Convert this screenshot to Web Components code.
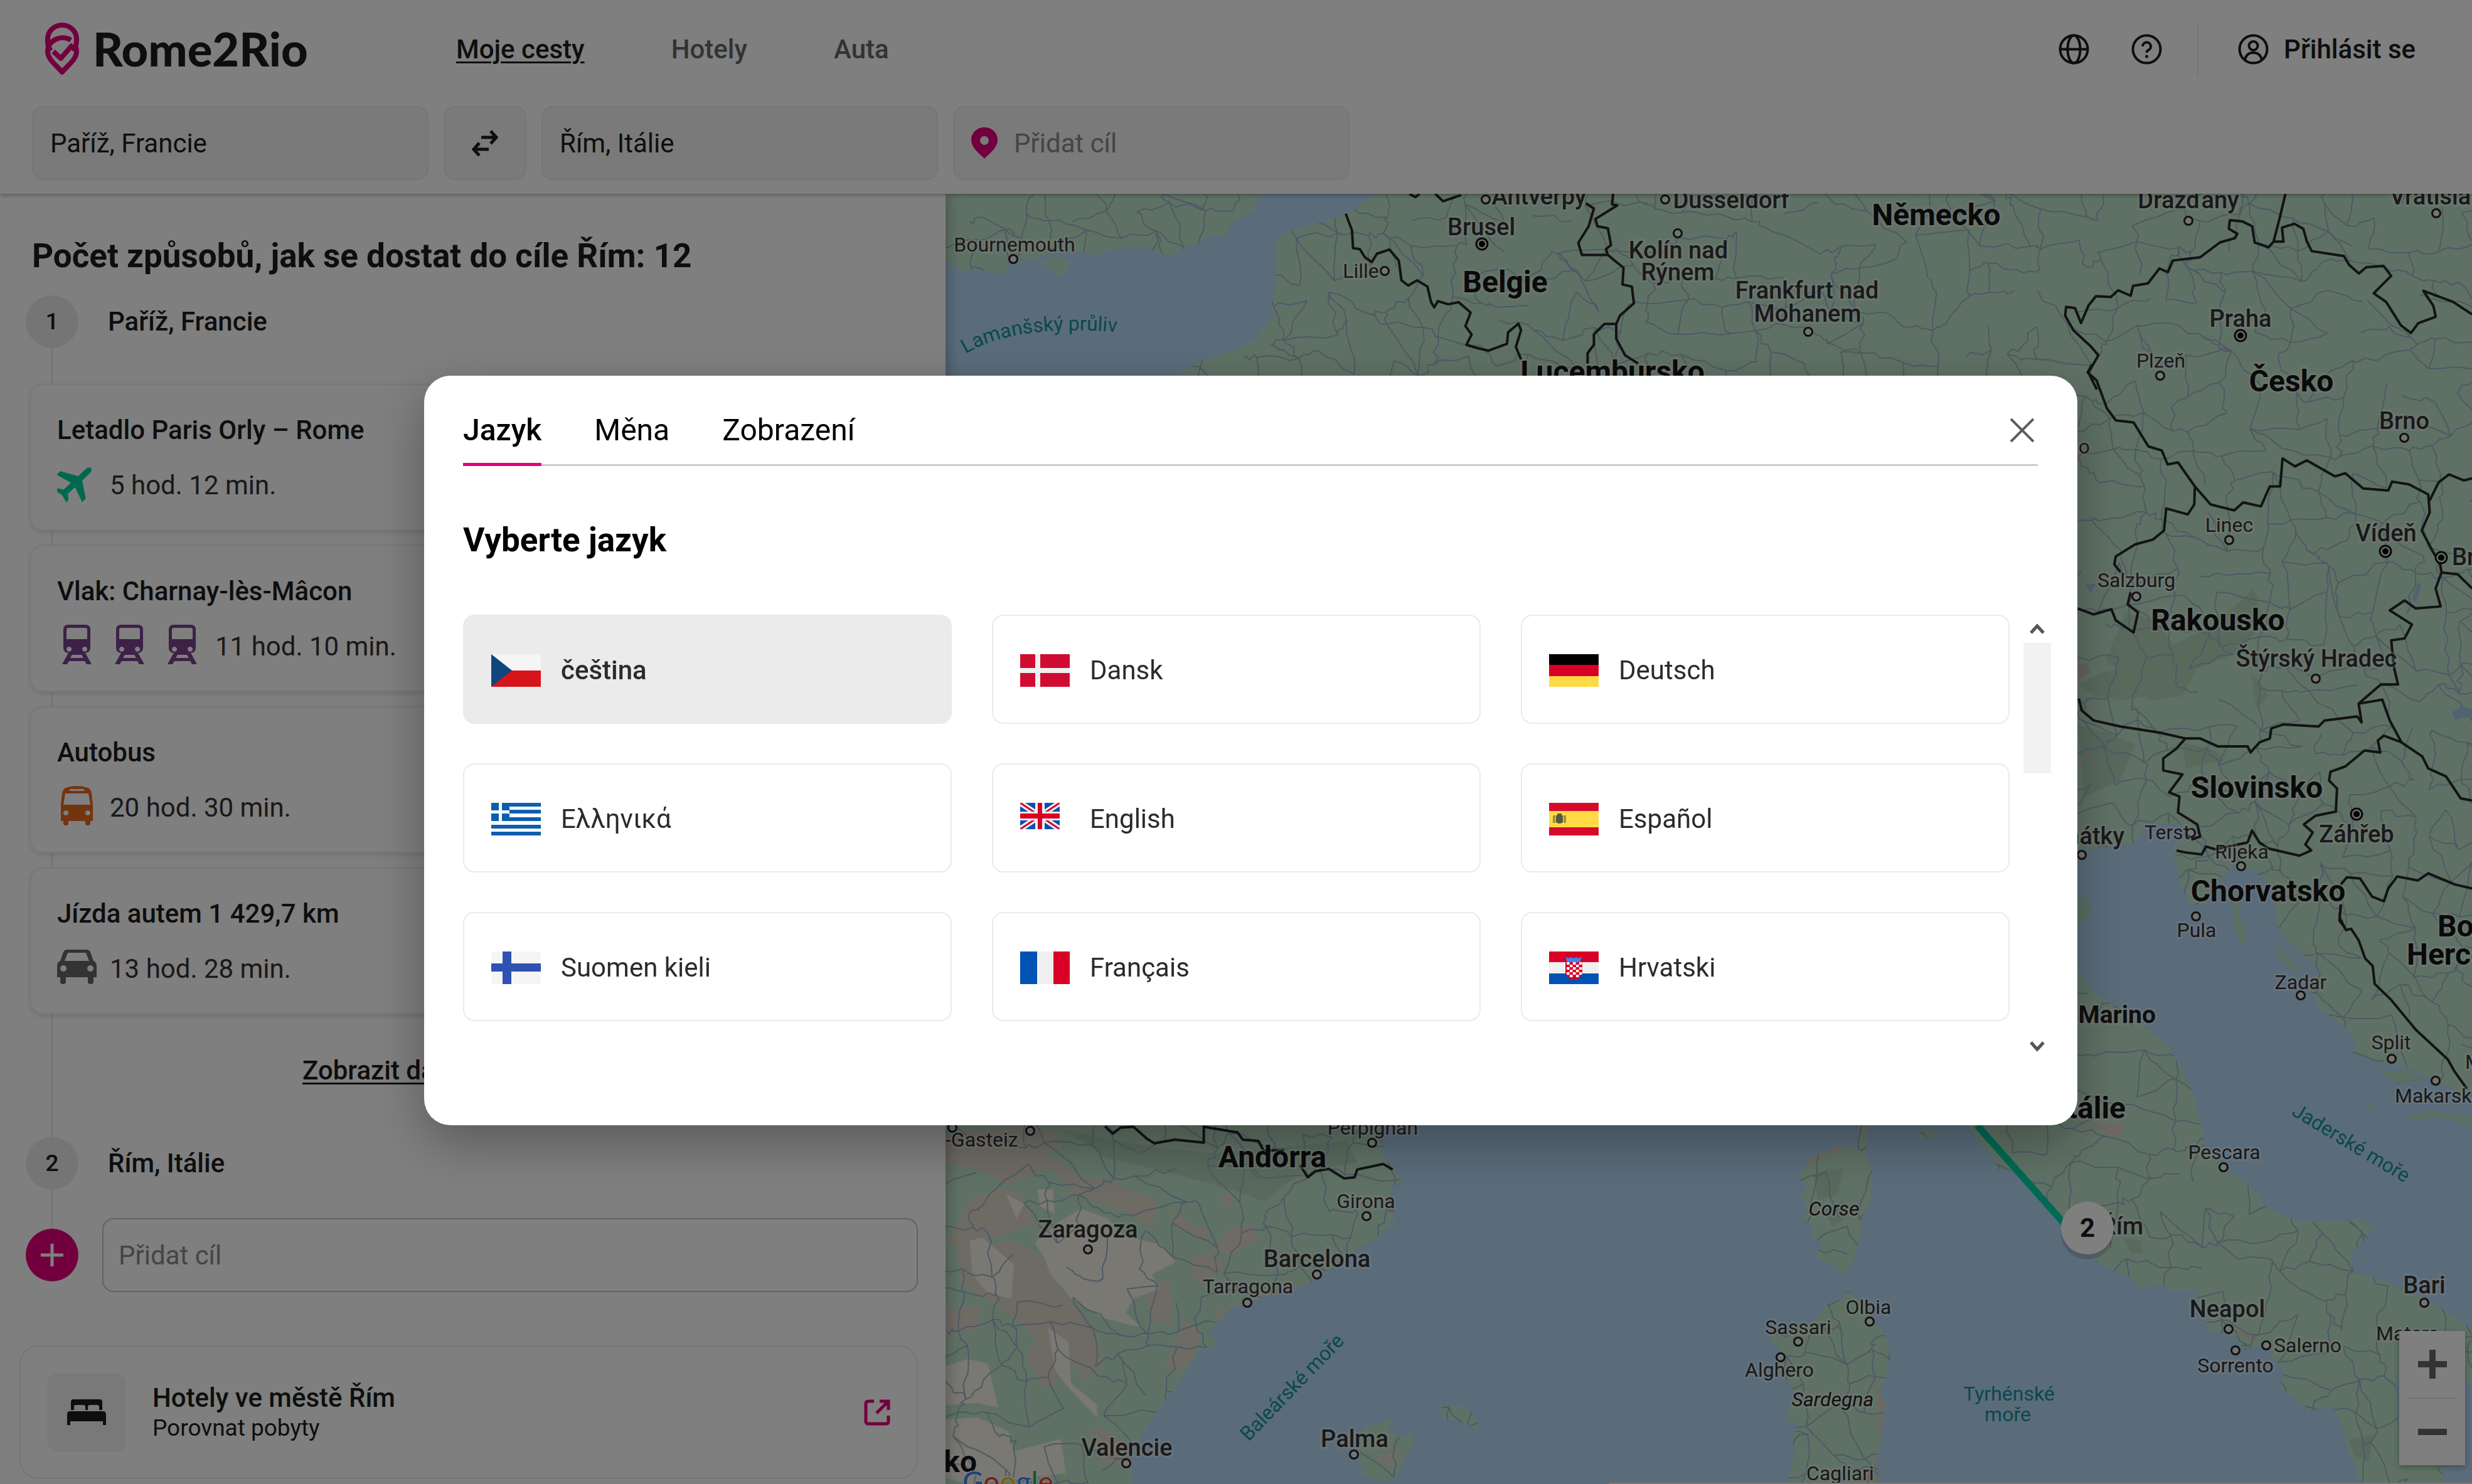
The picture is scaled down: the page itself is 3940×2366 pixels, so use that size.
<!DOCTYPE html>
<html lang="cs">
<head>
<meta charset="utf-8">
<title>Rome2Rio</title>
<style>
  html, body { margin: 0; height: 100%; }
  body { font-family: Roboto, "Liberation Sans", sans-serif; font-size: 42px; line-height: 50px; color: #1c1c1c; background: #fff; overflow: hidden; }
</style>
</head>
<body>
<r-app></r-app>

<script>
const define = (name, html, setup) => customElements.define(name, class extends HTMLElement {
  constructor() {
    super();
    const root = this.attachShadow({ mode: "open" });
    root.innerHTML = typeof html === "function" ? html(this) : html;
    if (setup) setup(root, this);
  }
});

const BASE = `<style>
  *, *::before { box-sizing: border-box; }
  button, input { font: inherit; color: inherit; margin: 0; padding: 0; border: 0; background: none; outline: none; }
  h1, h2, p { margin: 0; }
  a { color: inherit; }
  svg { display: block; flex: none; }
</style>`;

/* ---------- icons ---------- */
const ICONS = {
  pin: [54, 84, "0 0 54 84", `<g fill="none" stroke="#e5007d" stroke-width="8" stroke-linejoin="round"><path d="M9 45C3 37 4 31 4 26A23 22 0 0 1 50 26C50 34 49 40 45 46"/><path d="M41 28C27 19 4 27 4 46C4 59 18 68 27 79C36 68 50 59 50 46C50 41 48 37 46 34"/><path d="M13 46L25 57L44 35"/></g>`],
  globe: [49, 49, "0 0 49 49", `<g fill="none" stroke="#1c1c1c" stroke-width="4"><circle cx="24.500" cy="24.500" r="22"/><ellipse cx="24.500" cy="24.500" rx="10" ry="22"/><path d="M3 24.500h43"/></g>`],
  help: [49, 49, "0 0 49 49", `<g fill="none" stroke="#1c1c1c" stroke-width="4"><circle cx="24.500" cy="24.500" r="22"/><path d="M18 20a6.500 6.500 0 1 1 9 6c-2 1-2.500 2-2.500 4"/></g><circle cx="24.500" cy="36" r="2.500" fill="#1c1c1c"/>`],
  user: [49, 49, "0 0 49 49", `<g fill="none" stroke="#1c1c1c" stroke-width="4"><circle cx="24.500" cy="24.500" r="22"/><circle cx="24.500" cy="19" r="7"/><path d="M11 41c2-8 7-11 13.500-11s11.500 3 13.500 11"/></g>`],
  swap: [42, 42, "0 0 42 42", `<g fill="none" stroke="#1c1c1c" stroke-width="5"><path d="M15 12h24M30 2l9 10-9 10"/><path d="M27 31H3M12 21L3 31l9 10"/></g>`],
  marker: [42, 50, "0 0 42 50", `<path fill="#e5007d" fill-rule="evenodd" d="M21 0C9 0 0 9 0 20c0 12 12 21 21 30 9-9 21-18 21-30C42 9 33 0 21 0zm0 14a7 7 0 1 1 0 14 7 7 0 0 1 0-14z"/>`],
  plane: [63, 63, "2.500 2.500 20 20", `<path fill="#00d0a0" transform="rotate(47 12 12)" d="M21.500 16.500v-2.500l-8-5V3.500c0-.9-.7-2-1.500-2s-1.500 1.100-1.500 2V9l-8 5v2.500l8-2.500V19l-2.500 1.800V22.500l4-1 4 1v-1.700L13.500 19v-5l8 2.500z"/>`],
  train: [63, 63, "0 0 63 63", `<path fill="#7a428e" fill-rule="evenodd" d="M18 0h27q8 0 8 8v29q0 7-8 8l10 18h-8l-3-5H19l-3 5H8l10-18q-8-1-8-8V8q0-8 8-8zm0 5q-3 0-3 3v15h33V8q0-3-3-3zm1 30a4 4 0 1 0 .1 0zm25 0a4 4 0 1 0 .1 0zM24 48l-3 5h21l-3-5z"/>`],
  bus: [63, 63, "0 0 63 63", `<path fill="#e66b20" fill-rule="evenodd" d="M14 3Q31-3 49 3q5 2 6 9l2 18v26h-4v4q0 3-4 3t-4-3v-4H18v4q0 3-4 3t-4-3v-4H6V30L8 12q1-7 6-9zM20 5v3h23V5zM13 12l-3 18h43l-3-18zM14 39a4 4 0 1 0 .1 0zm35 0a4 4 0 1 0 .1 0z"/>`],
  car: [63, 63, "0 0 63 63", `<path fill="#666" fill-rule="evenodd" d="M16 4h31q4 0 6 4l5 14q5 2 5 8v18h-5v7q0 4-4.500 4T49 55v-7H14v7q0 4-4.500 4T5 55v-7H0V30q0-6 5-8l5-14q2-4 6-4zm1 5l-5 13h39L46 9zM10 29a5 5 0 1 0 .1 0zm43 0a5 5 0 1 0 .1 0z"/>`],
  plus: [42, 42, "0 0 42 42", `<path d="M21 3v36M3 21h36" stroke="#fff" stroke-width="5"/>`],
  bed: [62, 42, "0 0 62 42", `<path fill="#1c1c1c" d="M6 17V4q0-4 4-4h42q4 0 4 4v13h-5v-5q0-3-3-3H36q-3 0-3 3v5h-4v-5q0-3-3-3H14q-3 0-3 3v5zM5 19h52q5 0 5 5v17h-5v-6H5v6H0V24q0-5 5-5z"/>`],
  external: [42, 42, "0 0 42 42", `<path fill="none" stroke="#e5007d" stroke-width="5" d="M16 3H7Q3 3 3 7v28q0 4 4 4h28q4 0 4-4v-9M25 3h14v14M39 3L20 22"/>`],
  close: [38, 38, "0 0 38 38", `<path d="M1 1l36 36M37 1L1 37" stroke="#5c5c5c" stroke-width="4"/>`],
  up: [24, 18, "0 0 24 18", `<path d="M2 15L12 4l10 11" fill="none" stroke="#555" stroke-width="5"/>`],
  down: [24, 18, "0 0 24 18", `<path d="M2 3l10 11L22 3" fill="none" stroke="#555" stroke-width="5"/>`],
  zoomin: [46, 46, "0 0 46 46", `<path d="M23 0v46M0 23h46" stroke="#666" stroke-width="10"/>`],
  zoomout: [46, 46, "0 0 46 46", `<path d="M0 23h46" stroke="#666" stroke-width="10"/>`]
};
define("r-icon", el => {
  const [w, h, box, body] = ICONS[el.getAttribute("name")];
  return `<style>:host { display: block; flex: none } svg { display: block }</style><svg width="${w}" height="${h}" viewBox="${box}" aria-hidden="true">${body}</svg>`;
});

/* ---------- flags ---------- */
const checks = (() => { let s = ""; for (let r = 0; r < 6; r++) for (let c = 0; c < 5; c++) if ((r + c) % 2 === 0) s += `<rect x="${28 + c * 5}" y="${17 + r * 4}" width="4.500" height="4" />`; return s; })();
const FLAGS = {
  cs: `<path fill="#f5f5f5" d="M0 0h79v26H0z"/><path fill="#d7141a" d="M0 26h79v26H0z"/><path fill="#11457e" d="M0 0l33 26L0 52z"/>`,
  da: `<path fill="#d00c33" d="M0 0h79v52H0z"/><path fill="#f0f0f0" d="M24 0h8v52h-8zM0 22h79v8H0z"/>`,
  de: `<path d="M0 0h79v18H0z"/><path fill="#d80027" d="M0 17h79v18H0z"/><path fill="#ffda44" d="M0 35h79v17H0z"/>`,
  el: `<path fill="#fff" d="M0 0h79v52H0z"/><path fill="#0d5eaf" d="M0 0h79v6H0zM0 11h79v6H0zM0 23h79v6H0zM0 35h79v6H0zM0 46h79v6H0zM0 0h29v29H0z"/><path fill="#fff" d="M12 0h5v29h-5zM0 12h29v5H0z"/>`,
  en: `<svg width="63" height="42" viewBox="0 0 63 42"><path fill="#0052b4" d="M0 0h63v42H0z"/><path stroke="#f0f0f0" stroke-width="9" d="M0 0l63 42M63 0L0 42"/><path stroke="#d80027" stroke-width="3" d="M0 0l63 42M63 0L0 42"/><path fill="#f0f0f0" d="M24 0h15v42H24zM0 14h63v14H0z"/><path fill="#d80027" d="M28 0h7v42h-7zM0 17h63v8H0z"/></svg>`,
  es: `<path fill="#d80a2c" d="M0 0h79v52H0z"/><path fill="#ffda44" d="M0 13h79v26H0z"/><path fill="#a09236" d="M6 20h4v12H6zM23 20h4v12h-4z"/><path fill="#555a3a" d="M11 20h11v11q-5 4-11 0zM13 17h7v3h-7z"/>`,
  fi: `<path fill="#f5f5f5" d="M0 0h79v52H0z"/><path fill="#2e52b2" d="M18 0h14v52H18zM0 19h79v13H0z"/>`,
  fr: `<path fill="#f0f0f0" d="M0 0h79v52H0z"/><path fill="#0052b4" d="M0 0h27v52H0z"/><path fill="#d80027" d="M53 0h26v52H53z"/>`,
  hr: `<clipPath id="shield"><path d="M26 17h27v18q-2 8-13.500 11Q28 43 26 35z"/></clipPath><path fill="#f0f0f0" d="M0 0h79v52H0z"/><path fill="#d80027" d="M0 0h79v17H0z"/><path fill="#0052b4" d="M0 35h79v17H0z"/><path fill="#338af3" d="M26 9l3 8h20l3-8-5 2-4-2-4 2-4-2-4 2z"/><path fill="#d80027" d="M26 17h27v18q-2 8-13.500 11Q28 43 26 35z"/><g fill="#fff" clip-path="url(#shield)">${checks}</g>`
};
define("r-language", el => `${BASE}<style>
  :host { display: block }
  button { display: flex; align-items: center; gap: 32px; width: 100%; height: 174px; padding: 4px 43px 0; border: 2px solid #ebebeb; border-radius: 18px; color: #2b2b2b; text-align: left; }
  :host([selected]) button { background: #ebebeb; font-weight: 500; }
</style><button type="button"><svg width="79" height="52" viewBox="0 0 79 52" aria-hidden="true">${FLAGS[el.getAttribute("lang")]}</svg><slot></slot></button>`);

/* ---------- header ---------- */
define("r-field", el => `${BASE}<style>
  :host { display: block; flex: none; width: 632px }
  label { display: flex; align-items: center; gap: 26px; height: 118px; padding: 0 27px; background: #f4f4f4; border: 2px solid #ebebeb; border-radius: 18px; }
  input { flex: 1; min-width: 0; height: 100%; }
  input::placeholder { color: #8a8a8a; opacity: 1; }
  :host([outlined]) { width: auto; flex: 1 }
  :host([outlined]) label { background: #fff; border-color: #c4c4c4; padding: 0 24px; }
</style><label>${el.hasAttribute("marker") ? '<r-icon name="marker"></r-icon>' : ""}<input type="text" aria-label="${el.getAttribute("label")}" value="${el.getAttribute("value") || ""}" placeholder="${el.getAttribute("placeholder") || ""}"></label>`);

define("r-header", `${BASE}<style>
  :host { display: block; position: relative; z-index: 2; background: #fff; box-shadow: 0 2px 7px rgba(0,0,0,.3); padding-bottom: 22px; }
  .top { display: flex; align-items: center; height: 157px; padding: 0 90px 0 72px; }
  .logo { display: flex; align-items: center; gap: 22px; min-width: 655px; text-decoration: none; font: 900 74px/90px Lato, Roboto, sans-serif; padding-bottom: 2px; }
  nav { display: flex; gap: 138px; flex: 1; font-weight: 500; }
  nav a { text-decoration: none; color: #666; }
  nav a.on { color: #1c1c1c; text-decoration: underline; text-decoration-thickness: 3px; text-underline-offset: 5px; }
  .tools { display: flex; align-items: center; font-weight: 500; gap: 67px; }
  .tools button { display: flex; align-items: center; gap: 24px; }
  .rule { width: 2px; height: 88px; background: #ebebeb; margin: 0 -4px 0 -11px; }
  form { display: flex; gap: 24px; padding: 12px 51px 0; }
  .swap { display: grid; place-items: center; width: 132px; height: 118px; background: #f4f4f4; border: 2px solid #ebebeb; border-radius: 18px; }
</style>
<div class="top">
  <a class="logo" href="#"><r-icon name="pin"></r-icon><span>Rome2Rio</span></a>
  <nav><a class="on" href="#">Moje cesty</a><a href="#">Hotely</a><a href="#">Auta</a></nav>
  <div class="tools">
    <button type="button" aria-label="Jazyk"><r-icon name="globe"></r-icon></button>
    <button type="button" aria-label="Nápověda"><r-icon name="help"></r-icon></button>
    <span class="rule"></span>
    <button type="button"><r-icon name="user"></r-icon>Přihlásit se</button>
  </div>
</div>
<form>
  <r-field label="Odkud" value="Paříž, Francie"></r-field>
  <button class="swap" type="button" aria-label="Zaměnit"><r-icon name="swap"></r-icon></button>
  <r-field label="Kam" value="Řím, Itálie"></r-field>
  <r-field label="Další cíl" placeholder="Přidat cíl" marker></r-field>
</form>`);

/* ---------- sidebar ---------- */
define("r-stop", el => `${BASE}<style>
  :host { display: flex; align-items: center; gap: 47px; font-weight: 500 }
  .n { display: grid; place-items: center; width: 84px; height: 84px; border-radius: 50%; background: #ebebeb; font-size: 37px; flex: none; }
</style><span class="n">${el.getAttribute("n")}</span><slot></slot>`);

define("r-route", el => `${BASE}<style>
  :host { display: block }
  article { display: flex; flex-direction: column; gap: 28px; height: 234px; padding: 47px 41px 0; background: #fff; border: 2px solid #f0f0f0; border-radius: 20px; box-shadow: 0 3px 8px rgba(0,0,0,.12); }
  h2 { font-size: 42px; line-height: 50px; font-weight: 500; }
  div { display: flex; align-items: center; gap: 21px; color: #333; }
  span { padding-top: 6px; }
</style><article><h2><slot></slot></h2><div>${el.getAttribute("icons").split(" ").map(i => `<r-icon name="${i}"></r-icon>`).join("")}<span>${el.getAttribute("time")}</span></div></article>`);

define("r-sidebar", `${BASE}<style>
  :host { display: block; position: relative; z-index: 1; flex: none; width: 1507px; background: #fff; box-shadow: 0 0 24px rgba(0,0,0,.35); padding: 69px 44px 0 41px; overflow: hidden; }
  h1 { font-size: 53px; line-height: 60px; font-weight: 700; padding-left: 10px; margin-bottom: 33px; }
  .line { background: linear-gradient(#ececec, #ececec) no-repeat 40px 40px / 3px calc(100% - 80px); }
  .cards { display: flex; flex-direction: column; gap: 23px; padding: 57px 0 65px 7px; }
  .more { display: flex; padding-left: 441px; margin-bottom: 81px; }
  .more button { font-weight: 500; text-decoration: underline; text-decoration-thickness: 3px; text-underline-offset: 5px; white-space: nowrap; }
  .add { display: flex; align-items: center; gap: 38px; padding-top: 45px; }
  .add button { display: grid; place-items: center; width: 84px; height: 84px; border-radius: 50%; background: #e5007d; flex: none; }
  .hotel { display: flex; align-items: center; gap: 42px; height: 213px; margin: 85px 0 0 -10px; padding: 0 42px; border: 2px solid #ebebeb; border-radius: 30px; text-decoration: none; }
  .tile { display: grid; place-items: center; width: 126px; height: 126px; border-radius: 18px; background: #f2f2f2; }
  .text { flex: 1; display: flex; flex-direction: column; }
  .text b { font-weight: 500; }
  .text span { font-size: 37px; line-height: 46px; }
</style>
<h1>Počet způsobů, jak se dostat do cíle Řím: 12</h1>
<div class="line">
  <r-stop n="1">Paříž, Francie</r-stop>
  <div class="cards">
    <r-route icons="plane" time="5 hod. 12 min.">Letadlo Paris Orly – Rome</r-route>
    <r-route icons="train train train" time="11 hod. 10 min.">Vlak: Charnay-lès-Mâcon</r-route>
    <r-route icons="bus" time="20 hod. 30 min.">Autobus</r-route>
    <r-route icons="car" time="13 hod. 28 min.">Jízda autem 1 429,7 km</r-route>
  </div>
  <div class="more"><button type="button">Zobrazit další</button></div>
  <r-stop n="2">Řím, Itálie</r-stop>
  <div class="add"><button type="button" aria-label="Přidat cíl"><r-icon name="plus"></r-icon></button><r-field outlined label="Přidat cíl" placeholder="Přidat cíl"></r-field></div>
</div>
<a class="hotel" href="#"><span class="tile"><r-icon name="bed"></r-icon></span><span class="text"><b>Hotely ve městě Řím</b><span>Porovnat pobyty</span></span><r-icon name="external"></r-icon></a>`);

/* ---------- map ---------- */
const SHEET = {
  nw: "translate(1500 300) scale(.829 .3317)",
  n: "translate(2700 0) scale(.7908 .3954)",
  ne: "translate(3200 580) scale(.472 .6378)",
  e: "translate(2350 1180) scale(1.014 .408)",
  sw: "translate(1500 1760) scale(.829 .3865)",
  s: "translate(2700 1700) scale(.7908 .4247)"
};
const LAND = [
  ["nw", "M8 20H612L600 110 570 140 552 180 548 228 525 220 495 262 462 290 445 328 380 278 310 300 296 332 270 300 210 310 180 335 126 345 126 410 60 388 52 408 8 345ZM190 352L222 318 250 350 238 400 222 418Z"],
  ["nw", "M840 20L780 120 740 155 680 195 655 220 640 265 645 340 640 500 634 560 640 625 628 640 605 720 570 775 500 825 455 900H1568V20Z"],
  ["n", "M0 700H1568V1568H0Z"],
  ["ne", "M200 0H1568V1960H200Z"],
  ["sw", "M0 60H850V210L870 260 885 320 862 345 872 420 870 490 830 560 790 610 735 700 700 745 610 800 555 840 535 890 512 945 533 985 495 1015 475 1090 450 1170 420 1250 390 1350 375 1410 365 1480 368 1568H0Z"],
  ["sw", "M805 1380L815 1330 865 1298 862 1345 885 1370 905 1360 908 1400 890 1450 880 1520 855 1560 810 1530 805 1450ZM962 1245L1000 1243 1022 1270 1032 1315 1028 1340 990 1300 962 1300Z"],
  ["s", "M550 200H775V0H990L1000 80 1020 200 1045 320 1080 390 1140 480 1145 520 1190 560 1225 582 1310 580 1340 568 1366 610 1350 660 1322 700 1330 770 1400 810 1440 850 1480 870 1540 950 1568 985V1185L1415 1180 1425 1490 1510 1500V1568H1345L1320 1450 1305 1340 1285 1270 1245 1295 1180 1200 1190 1150 1170 1090 1150 1040 1110 1065 1090 1010 1040 995 1020 900 1005 835 968 845 940 815 900 835 880 790 830 755 790 680 740 580 710 530 690 470 640 390 600 385 612 350 575 290Z"],
  ["s", "M330 200H350L348 340 358 380 360 440 355 510 340 560 335 650 318 740 302 778 285 745 250 720 246 690 265 670 235 640 240 600 220 570 230 530 212 485 228 460 210 410 228 370 228 345 290 300 330 300ZM450 245L490 235 492 262 460 268Z"],
  ["s", "M310 835L320 860 360 900 362 960 385 1000 396 1090 385 1180 375 1200 385 1265 378 1380 370 1470 372 1568H185L195 1500 205 1440 195 1400 210 1340 185 1330 190 1270 210 1240 190 1180 165 1130 175 1060 150 1020 170 990 240 960 270 890 300 870Z"]
];
const SEA = "M930 430L985 420 1040 400 1055 320 1110 330 1138 350 1130 385 1100 395 1098 430 1105 500 1110 570 1125 640 1148 640 1160 570 1180 520 1200 470 1225 510 1250 560 1262 620 1258 700 1270 760 1300 830 1328 900 1310 960 1330 1050 1370 1120 1385 1170 1380 1220 1410 1250 1470 1280 1520 1340 1568 1390V1600H1150L1140 1480 1130 1380 1110 1270 1090 1190 1050 1110 1010 1040 975 990 948 900 930 880Z";
const ISLES = [
  ["e", "M1190 600L1208 600 1200 680 1215 760 1205 800 1195 740ZM1240 700L1250 740 1246 700ZM1255 790L1275 830 1300 900 1290 905 1265 850ZM1420 1290L1490 1310 1490 1330 1450 1340ZM948 630L962 610 970 660 958 710 948 700Z"],
  ["s", "M1435 185L1490 165 1568 190V222L1500 190 1440 200ZM1352 150L1368 135 1370 150 1358 162ZM1380 12L1400 20 1440 10 1470 50 1430 62 1400 50Z"]
];
const DRY = [
  ["sw", "#dcd6c9", "M8 130L80 100 170 90 215 110 232 175 205 210 260 290 320 310 420 400 405 500 350 440 250 360 215 260 130 330 60 260 8 245ZM60 380L130 340 160 400 180 490 50 590 8 570ZM30 600L140 560 200 640 230 760 300 940 310 1080 280 1140 245 1060 215 1160 190 1160 165 1040 180 960 130 860 40 740ZM440 420L470 480 520 520 500 560 450 500ZM540 370L565 380 555 420 538 405ZM560 500L595 495 612 560 580 590 565 620 520 600ZM480 640L520 600 545 670 500 740 480 700ZM390 760L440 720 445 910 405 890ZM470 890L500 940 480 1060 450 1110 430 1070ZM8 850L75 830 70 930 8 950ZM530 860L555 830 610 790 700 735 700 760 560 840 530 900ZM285 1350L310 1330 365 1420 365 1500 310 1480ZM835 1450L880 1430 870 1490 850 1480Z"],
  ["sw", "#f4f0e4", "M185 350L215 350 218 450 190 420ZM230 480L270 430 320 470 350 540 425 580 450 650 405 700 420 760 370 800 355 860 385 920 310 880 250 800 210 700 200 640 180 570ZM55 560L80 550 140 660 135 800 90 780 60 700ZM125 370L160 410 145 470ZM205 920L245 980 250 1150 300 1240 300 1290 250 1180 220 1100ZM8 1080L50 1050 90 1070 110 1250 70 1230 8 1240ZM8 1300L70 1290 130 1350 140 1430 230 1380 240 1520 60 1568 8 1540Z"],
  ["s", "#dcd0c4", "M780 215L860 215 868 250 845 262 820 235ZM240 330L290 298 300 305 245 345ZM228 345L245 345 235 375ZM575 290L612 350 605 355 570 270ZM1095 985L1135 1010 1130 1030 1100 1010ZM365 1190L385 1260 378 1360 372 1370 372 1260ZM355 1500L368 1470 370 1568 320 1568Z"],
  ["ne", "#cfc6c0", "M236 750L265 745 280 770 240 785ZM240 1000L280 955 290 965 250 1000ZM840 1345L875 1340 870 1358 850 1358Z"]
];
const RELIEF = [
  ["ne", "M400 620L500 640 560 700 700 650 830 560 870 640 780 720 640 760 590 830 480 840 400 780 330 740ZM820 770L850 790 880 830 840 860ZM236 800L320 770 400 760 470 830 390 840 300 830ZM236 900L330 920 430 950 380 1040 260 1080ZM590 945L700 965 730 990 600 1010Z"],
  ["sw", "M240 110L420 180 520 200 640 180 780 150 800 240 700 270 620 400 560 350 440 280 320 220Z"],
  ["s", "M240 400L300 380 290 480 250 500ZM260 540L300 500 310 560 280 600ZM1320 1400L1370 1380 1360 1480 1330 1460ZM865 640L900 650 905 700 880 700Z"]
];
const BORDERS = [
  ["nw", "M778 120L790 200 792 285 805 290 815 330 828 352 838 312 862 292 880 345 885 440 898 465 915 440 935 470 942 545 948 570 955 540 975 555 995 545 1018 595 1008 660 1020 700 1010 750 1030 765 1052 778 1088 745 1090 690 1110 648 1115 680 1105 760 1115 820M950 24L965 60 1000 30M900 24L912 40 920 24M1240 70L1255 95 1245 180 1225 260 1232 318 1282 318 1278 290 1288 270 1282 190 1262 180 1258 145 1300 80 1290 75 1292 24M1282 318L1295 345 1312 380 1310 460 1328 470 1332 550 1305 610 1298 650 1275 650 1255 700 1255 750 1243 790 1243 840M1298 650V720L1315 800 1340 840"],
  ["n", "M1192 779L1180 880 1168 972 1188 972 1185 915 1210 900 1228 920 1235 970 1245 1010 1310 1030 1320 1065 1340 1100 1355 1075 1390 1070 1405 1110 1370 1180 1395 1215 1425 1310 1445 1340 1460 1300 1495 1275 1490 1230 1470 1170 1530 1215 1568 1265M1168 972L1158 995 1130 975 1125 910 1105 890 1080 885 1078 920 1095 940 1090 958 1060 975 1020 1035 965 1048 955 1095 938 1080 915 1140 885 1150 880 1190 855 1168 840 1195 810 1192 795 1230 780 1300 768 1240 750 1235 748 1270 765 1330 800 1395 815 1430 795 1500 812 1568"],
  ["ne", "M285 0L270 20 300 40 335 110 365 140 425 145 475 205 520 215 540 250 575 245 632 305 685 350 765 365 795 345 855 355 885 305 920 305 928 235 970 255 1010 240 1105 280 1140 272 1200 310 1285 315 1298 293 1355 300 1420 325 1425 370 1398 415 1430 460 1460 500 1465 520 1445 560 1462 605 1378 610 1340 590 1290 615 1365 650 1340 685 1295 690 1305 760 1318 800 1260 800 1185 848 1195 895 1180 880 1070 890 1050 905 930 900 890 910 885 935 850 945 820 970 810 955 710 955 650 935 600 935 510 920 380 905 290 890 250 865 240 835"],
  ["ne", "M632 305L630 350 608 375 535 360 528 415 490 438 430 450 365 480 360 500 382 520M415 570L405 600 440 620 425 670 365 640 350 612 290 625 236 610M1425 340L1455 295 1490 275 1540 290 1568 285M1465 520L1520 525 1568 560M1185 848L1265 838 1290 890 1330 945 1270 928 1250 940 1258 970 1205 965 1140 1005 1090 1018 1085 1040 1112 1060 1108 1118 1040 1128 1000 1150 1030 1170 1005 1200 1025 1215 985 1228 880 1210 850 1195 825 1165 810 1195 700 1212 670 1205 655 1225 600 1220 570 1215M1330 945L1400 980 1420 1010 1480 1030 1530 1085 1568 1090M600 935L570 960 525 985 525 1015 590 1025 545 1070 580 1080 575 1120 640 1150 650 1180 620 1188"],
  ["ne", "M1125 1350L1120 1390 1145 1415M1125 1300L1145 1282 1190 1285 1230 1330 1270 1342 1285 1310 1315 1280 1385 1290 1420 1272 1510 1300 1568 1310"],
  ["e", "M1362 640L1360 690 1370 740 1378 735 1390 780 1400 850 1412 880 1415 950 1440 1010 1480 1130 1530 1245 1540 1290 1560 1360"],
  ["sw", "M315 90L330 120 345 95 370 92 395 140 410 160 450 145 505 157 505 92 570 115 580 145 610 150 620 190 660 188M690 250L705 300 720 275 745 265 775 305 795 300 800 268 850 245 868 268"]
];
// kind: b country, c large city, t town, m small state, i island, w water; a: anchor
const LABELS = [
  ["t","Bournemouth",1617,400],["t","Lille",2169,442],["c","Brusel",2361,374],["c","Antverpy",2453,325],["b","Belgie",2399,465],["c","Düsseldorf",2759,331],
  ["c","Kolín nad",2675,411],["c","Rýnem",2674,446],["c","Frankfurt nad",2880,475],["c","Mohanem",2881,512],["b","Německo",3086,358],["b","Lucembursko",2570,608],
  ["c","Drážďany",3488,331],["c","Vratislav",3809,325,"start"],["c","Praha",3571,520],["t","Plzeň",3444,585],["b","Česko",3652,623],["c","Brno",3832,683],
  ["t","Linec",3553,847],["c","Vídeň",3803,862],["c","Bratislava",3908,900,"start"],["t","Salzburg",3405,935],["b","Rakousko",3535,1004],["c","Štýrský Hradec",3692,1062],
  ["t","Řezno",3331,722,"end"],["b","Slovinsko",3597,1271],["c","Záhřeb",3756,1342],["t","Terst",3418,1337,"start"],["t","Rijeka",3573,1368],["c","Benátky",3386,1345,"end"],
  ["b","Chorvatsko",3615,1436],["t","Pula",3501,1493],["b","Bosna a",3885,1492,"start"],["b","Hercegovina",3836,1537,"start"],["t","Zadar",3667,1576],["t","Split",3811,1672],
  ["t","Makarska",3817,1757,"start"],["t","Mostar",3929,1703,"start"],["m","San Marino",3436,1630,"end"],["b","Itálie",3388,1782,"end"],["t","Pescara",3545,1847],
  ["c","Řím",3416,1967,"end"],["c","Neapol",3550,2099],["t","Salerno",3624,2155,"start"],["t","Sorrento",3563,2187],["c","Bari",3864,2061],["t","Matera",3787,2136,"start"],
  ["t","Olbia",2978,2094],["t","Sassari",2866,2126],["t","Alghero",2836,2194],["i","Sardegna",2921,2241],["i","Corse",2923,1937],["t","Cagliari",2933,2359],
  ["w","Tyrhénské",3202,2232],["w","moře",3200,2265],["b","Andorra",2028,1860],["t","-Gasteiz",1507,1827,"start"],["t","Perpignan",2188,1808],["t","Girona",2177,1925],
  ["c","Zaragoza",1734,1972],["c","Barcelona",2099,2019],["t","Tarragona",1989,2061],["c","Valencie",1796,2320],["c","Palma",2159,2306],["b","Španělsko",1557,2346,"end"]
];
const DOTS = [[1615,412],[2207,431],[2368,317],[2654,317],[2674,371],[2882,528],[3488,351],[3883,339],[3443,598],[3832,697],[3553,860],[3405,950],[3691,1081],[3492,1327],[3572,1380],[3318,1362],[3500,1460],[3667,1586],[3812,1687],[3882,1722],[3544,1860],[3552,2118],[3612,2144],[3563,2152],[3864,2076],[2980,2106],[2866,2138],[2838,2163],[1518,1797],[1642,1802],[2187,1821],[2178,1938],[1734,1991],[2099,2031],[1988,2076],[1795,2332],[2158,2318]];
const CAPITALS = [[2362,388],[3571,534],[3802,878],[3891,888],[3756,1297]];

function roads() {
  let seed = 11;
  const rnd = () => (seed = (seed * 1103515245 + 12345) % 2147483648) / 2147483648;
  const x0 = 1490, y0 = 290, w = 48, h = 48, cols = 53, rows = 45, p = [];
  for (let r = 0; r < rows; r++) { p.push([]); for (let c = 0; c < cols; c++) p[r].push([x0 + c * w + (rnd() - .5) * 42, y0 + r * h + (rnd() - .5) * 42]); }
  const link = (a, b) => {
    let s = `M${a[0] | 0} ${a[1] | 0}`;
    for (let i = 1; i < 4; i++) s += `L${a[0] + (b[0] - a[0]) * i / 4 + (rnd() - .5) * 10 | 0} ${a[1] + (b[1] - a[1]) * i / 4 + (rnd() - .5) * 10 | 0}`;
    return s + `L${b[0] | 0} ${b[1] | 0}`;
  };
  let d = "";
  for (let r = 0; r < rows - 1; r++) for (let c = 0; c < cols - 1; c++) {
    if (rnd() < .62) d += link(p[r][c], p[r][c + 1]);
    if (rnd() < .62) d += link(p[r][c], p[r + 1][c]);
    if (rnd() < .14) d += link(p[r][c], p[r + 1][c + 1]);
  }
  return d;
}
const shape = (list, extra) => list.map(([s, d]) => `<path transform="${SHEET[s]}" d="${d}" ${extra || ""}/>`).join("");
define("r-map", `${BASE}<style>
  :host { display: block; position: relative; flex: 1; min-width: 0; background: #b5d8f5; overflow: hidden; }
  .canvas { width: 100%; height: 100%; }
  text { font-family: Roboto, "Liberation Sans", sans-serif; text-anchor: middle; paint-order: stroke; stroke: rgba(255,255,255,.35); stroke-width: 6px; stroke-linejoin: round; fill: #333; }
  .b { font-size: 48px; font-weight: 700; fill: #151515; }
  .m { font-size: 39px; font-weight: 700; fill: #202020; }
  .c { font-size: 38px; font-weight: 500; }
  .t { font-size: 32px; }
  .i { font-size: 32px; font-style: italic; fill: #222; }
  .w { font-size: 32px; fill: #14909c; stroke: none; }
  .g { font: 500 46px Lato, sans-serif; stroke: #fff; stroke-width: 3px; text-anchor: start; }
  .zoom { position: absolute; right: 11px; bottom: 30px; width: 105px; background: #fff; box-shadow: 0 3px 10px rgba(0,0,0,.3); display: flex; flex-direction: column; align-items: center; }
  .zoom button { display: grid; place-items: center; width: 100%; height: 106px; }
  .zoom i { width: 77px; height: 2px; background: #e0e0e0; }
</style>
<svg class="canvas" viewBox="1507 308 2433 2058" preserveAspectRatio="xMinYMin slice" role="img" aria-label="Mapa">
  <clipPath id="land">${shape(LAND)}</clipPath>
  ${shape(LAND, 'fill="#bfe2ca"')}
  <g clip-path="url(#land)">
    ${shape(RELIEF, 'fill="#b2d4bb"')}
    ${DRY.map(([s, f, d]) => `<path transform="${SHEET[s]}" d="${d}" fill="${f}"/>`).join("")}
    <path d="${roads()}" fill="none" stroke="#9db3c9" stroke-width="2"/>
  </g>
  <path transform="${SHEET.e}" d="${SEA}" fill="#b5d8f5"/>
  ${shape(ISLES, 'fill="#b9dcc4"')}
  <path transform="${SHEET.ne}" d="M1500 870L1530 855 1568 860V880L1510 888ZM1365 590L1385 545 1396 550 1380 595ZM262 550L300 548 280 570Z" fill="#a6c4e2"/>
  ${shape(BORDERS, 'fill="none" stroke="#262626" stroke-width="4" stroke-linejoin="round" vector-effect="non-scaling-stroke"')}
  ${DOTS.map(([x, y]) => `<circle cx="${x}" cy="${y}" r="6.500" fill="#e8e8e8" stroke="#222" stroke-width="3"/>`).join("")}
  ${CAPITALS.map(([x, y]) => `<circle cx="${x}" cy="${y}" r="9" fill="#ddd" stroke="#111" stroke-width="3"/><circle cx="${x}" cy="${y}" r="5" fill="#000"/>`).join("")}
  <path id="manche" d="M1539 563Q1630 508 1830 534" fill="none"/>
  <text class="w" style="text-anchor:start"><textPath href="#manche">Lamanšský průliv</textPath></text>
  <text class="w" style="text-anchor:start" transform="translate(3651 1776) rotate(31)">Jaderské moře</text>
  <text class="w" style="text-anchor:start" transform="translate(1990 2298) rotate(-46)">Baleárské moře</text>
  ${LABELS.map(([k, t, x, y, a]) => `<text class="${k}" x="${x}" y="${y}"${a ? ` style="text-anchor:${a}"` : ""}>${t}</text>`).join("")}
  <path d="M3151 1793L3300 1961" stroke="#00d4a8" stroke-width="11"/>
  <circle cx="3327" cy="1965" r="42" fill="rgba(0,0,0,.15)"/><circle cx="3327" cy="1957" r="42" fill="#fff"/>
  <text x="3327" y="1971" style="font-size:42px;font-weight:700;stroke:none;fill:#1c1c1c">2</text>
  <text class="g" x="1534" y="2378"><tspan fill="#4285f4">G</tspan><tspan fill="#ea4335">o</tspan><tspan fill="#fbbc05">o</tspan><tspan fill="#4285f4">g</tspan><tspan fill="#34a853">l</tspan><tspan fill="#ea4335">e</tspan></text>
  <path d="M2565 2363H3940V2366H2565Z" fill="#f0f0f0"/>
</svg>
<div class="zoom"><button type="button" aria-label="Přiblížit"><r-icon name="zoomin"></r-icon></button><i></i><button type="button" aria-label="Oddálit"><r-icon name="zoomout"></r-icon></button></div>`);

/* ---------- dialog ---------- */
define("r-dialog", `${BASE}<style>
  :host { position: fixed; inset: 0; z-index: 10; display: grid; place-items: center; padding: 27px 0 0 47px; box-sizing: border-box; background: rgba(0,0,0,.5); color: #000; }
  section { width: 68%; max-width: 2635px; height: 1195px; background: #fff; border-radius: 42px; box-shadow: 0 28px 84px rgba(0,0,0,.3); padding: 0 42px 0 62px; }
  header { display: flex; gap: 84px; align-items: stretch; height: 144px; margin-right: 21px; padding-top: 34px; box-shadow: inset 0 -3px #ccc; font-size: 48px; }
  header button { border-bottom: 5px solid transparent; }
  header .on { font-weight: 500; border-color: #e5007d; }
  header .x { margin-left: auto; padding-right: 6px; }
  h2 { font-size: 53px; line-height: 60px; font-weight: 700; margin: 88px 0 89px; }
  .scroll { display: flex; gap: 22px; }
  .grid { flex: 1; display: grid; grid-template-columns: repeat(3, 1fr); gap: 63px 64px; align-content: start; }
  .bar { width: 44px; height: 710px; display: flex; flex-direction: column; align-items: center; }
  .bar button { display: grid; place-items: center; width: 44px; height: 45px; }
  .bar i { width: 44px; height: 208px; background: #f2f2f2; margin-bottom: auto; }
</style>
<section role="dialog" aria-label="Nastavení">
  <header><button type="button" class="on">Jazyk</button><button type="button">Měna</button><button type="button">Zobrazení</button><button type="button" class="x" aria-label="Zavřít"><r-icon name="close"></r-icon></button></header>
  <h2>Vyberte jazyk</h2>
  <div class="scroll">
    <div class="grid">
      <r-language lang="cs" selected>čeština</r-language><r-language lang="da">Dansk</r-language><r-language lang="de">Deutsch</r-language>
      <r-language lang="el">Ελληνικά</r-language><r-language lang="en">English</r-language><r-language lang="es">Español</r-language>
      <r-language lang="fi">Suomen kieli</r-language><r-language lang="fr">Français</r-language><r-language lang="hr">Hrvatski</r-language>
    </div>
    <div class="bar"><button type="button" aria-label="Nahoru"><r-icon name="up"></r-icon></button><i></i><button type="button" aria-label="Dolů"><r-icon name="down"></r-icon></button></div>
  </div>
</section>`);

define("r-app", `${BASE}<style>
  :host { display: flex; flex-direction: column; height: 100vh; }
  main { flex: 1; min-height: 0; display: flex; }
</style><r-header></r-header><main><r-sidebar></r-sidebar><r-map></r-map></main><r-dialog></r-dialog>`);
</script>
</body>
</html>
